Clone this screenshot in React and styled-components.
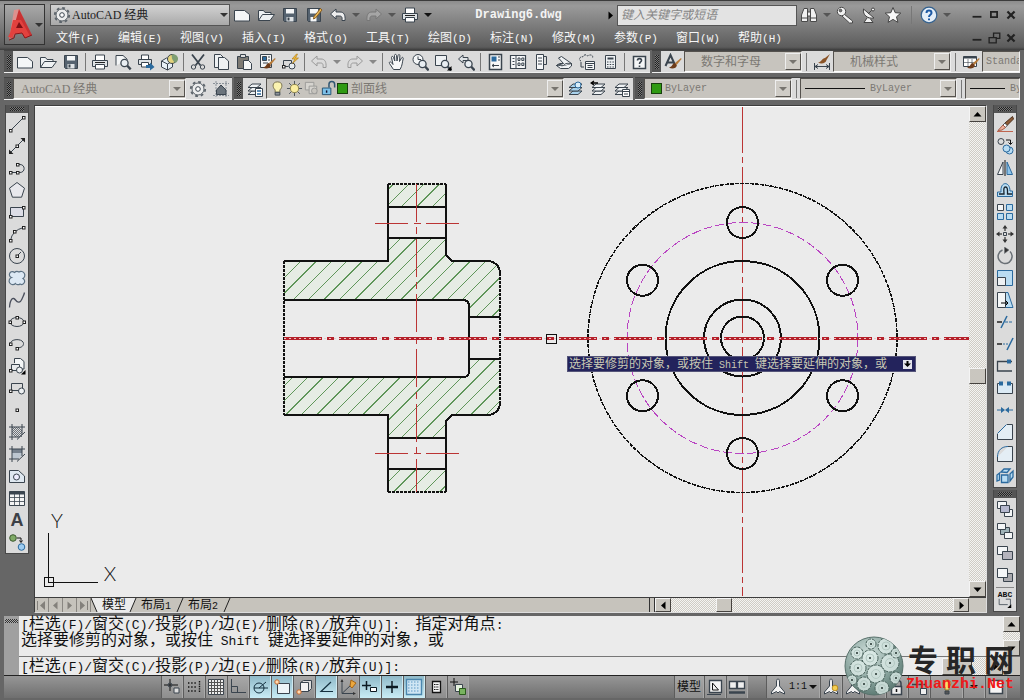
import React from 'react';
import styled, { createGlobalStyle } from 'styled-components';

const INK = '#3a444e';
const BLUE = '#2b6a9e';
const SKY = '#b9dcf2';
const SONG = "'Liberation Serif', 'Noto Sans CJK SC', serif";

const GlobalStyle = createGlobalStyle`
  *, *::before, *::after { box-sizing: border-box; }
  body {
    margin: 0;
    background: #666;
    font: 12px/14px ${SONG};
    color: #111;
  }
  button, input, select {
    margin: 0;
    padding: 0;
    border: 0;
    border-radius: 0;
    background: none;
    color: inherit;
    font: inherit;
  }
`;

/* ---------- icons ---------- */

const Node = ({ x, y }) => (
  <rect x={x - 1} y={y - 1} width="2.5" height="2.5" fill="#fff" stroke="#222" />
);
const Corner = () => <path d="M17.5 13v4.5H13Z" fill="#000" stroke="none" />;
const Lens = ({ x = 10.5, y = 10 }) => (
  <g>
    <circle cx={x} cy={y} r="3.6" fill="#e9eef2" strokeWidth="1.3" />
    <path d={`M${x + 2.8} ${y + 2.8}l3.4 3.6`} strokeWidth="2.4" />
  </g>
);
const Brush = () => (
  <g stroke="none">
    <path d="M17 5l-6 5 1.6 2L17.6 6Z" fill="#b77b3a" />
    <path d="M11 10c-3 .2-2 3.500-6 4.500 3 2 7.500 1 7.800-2.300Z" fill="#6f3c1a" />
  </g>
);
const Sheets = ({ fill = '#eef1f3' }) => (
  <g fill={fill}>
    <path d="M2 14.500l4-3.500h9l-4 3.500Z" />
    <path d="M2 11l4-3.500h9L11 11Z" />
    <path d="M2 7.500L6 4h9l-4 3.500Z" />
  </g>
);
const Frame = ({ children }) => (
  <g>
    {children}
    <path d="M4 1v16M1 4h16M14 1v10M1 14h10M9 16.500L17 9" />
  </g>
);
const Airscale = ({ fill = '#f2f2f2' }) => (
  <path
    d="M9 1c1 0 1.500 1 1.500 3v4l5 6v2l-5-2.500L9 15l-1.500-1.500L2.500 16v-2l5-6V4C7.500 2 8 1 9 1Z"
    fill={fill}
  />
);

const glyphs = {
  new: <path d="M1.500 4.500h10l5 4V15h-15Z" fill="#f4f6f7" />,
  open: (
    <g fill="#eef1f3">
      <path d="M1.500 14.500v-10h5l1.500 2h6v2" />
      <path d="M1.500 14.500l4-6h12l-4.500 6Z" />
    </g>
  ),
  save: (
    <g>
      <path d="M2.500 2.500h13v13h-12l-1-1Z" fill="#55626f" />
      <path d="M5 3h8v4.500H5Z" fill="#f5f6f7" stroke="none" />
      <path d="M5.500 11h7v4.500h-7Z" fill="#dfe3e6" stroke="none" />
      <path d="M6.500 11.500h2v3h-2Z" fill="#3a444e" stroke="none" />
    </g>
  ),
  saveAs: (
    <g>
      <path d="M2.500 2.500h13v13h-12l-1-1Z" fill="#55626f" />
      <path d="M5 3h8v4.500H5ZM5.500 11h6v4.500h-6Z" fill="#f5f6f7" stroke="none" />
      <path d="M17 4l-6.500 8-2 1 .5-2.500L15.500 2.500Z" fill="#eebd5a" stroke="#8a5c20" />
    </g>
  ),
  undo: <path d="M1.500 8L7 3v3h4c4 0 5.500 3 5 8.500h-3c.5-3.500-.5-4.500-2.500-4.500H7v3Z" />,
  redo: <path d="M16.500 8L11 3v3H7c-4 0-5.500 3-5 8.500h3C4.500 11 5.500 10 7.500 10H11v3Z" />,
  print: (
    <g>
      <path d="M4.500 7V2h9v5" fill="#fff" />
      <path d="M1.500 7.500h15v6h-15Z" fill="#dfe3e6" />
      <path d="M4.500 11.500h9V16h-9Z" fill="#fff" />
      <path d="M4 9.500h10" stroke="#222" />
    </g>
  ),
  preview: (
    <g>
      <path d="M2 12.500V2.500h7l4.500 4" fill="#f4f6f7" />
      <Lens />
    </g>
  ),
  publish: (
    <g>
      <path d="M4.500 6V2h7v4" fill="#fff" />
      <path d="M1.500 6.500h13v5h-13Z" fill="#dfe3e6" />
      <path d="M4.500 9.500h7V14h-7Z" fill="#fff" />
      <path d="M9 12h4V9.500L17.500 14 13 17.500V15H9Z" fill={BLUE} stroke="none" />
    </g>
  ),
  globe: (
    <g>
      <path d="M1.500 8l5-3 6 3v6l-5 3-6-3Z" fill="#e7f0f6" />
      <path d="M1.500 8l6 3 5-3M7.500 11v6" />
      <circle cx="12" cy="6" r="4.500" fill="#e3d27c" />
      <path d="M12 1.500A4.500 4.500 0 0 1 15 10c-2-3-4-4-3-8.500Z" fill="#7f9f74" stroke="none" />
    </g>
  ),
  cut: (
    <g>
      <path d="M3 1.500l8.500 11M15 1.500l-8.500 11" strokeWidth="1.800" />
      <circle cx="4.500" cy="14" r="2.200" />
      <circle cx="13.500" cy="14" r="2.200" />
    </g>
  ),
  copyClip: (
    <g fill="#eef1f3">
      <path d="M2.500 14.500v-13h6l3 3v10Z" />
      <path d="M6.500 16.500v-12h6l4 3.500v8.500Z" />
    </g>
  ),
  paste: (
    <g>
      <path d="M2.500 3.500h11v12h-11Z" fill="#7d7a74" />
      <path d="M5.500 1.500h5v3h-5Z" fill="#ddd" />
      <path d="M8.500 7.500h5l3 3v6h-8Z" fill="#f4f6f7" />
    </g>
  ),
  match: (
    <g>
      <path d="M2.500 1.500h11v13h-11Z" fill="#f4f6f7" />
      <path d="M4.500 3.500h4v4h-4Z" fill={BLUE} />
      <path d="M10 4h2M10 7h2M5 10h5" />
      <Brush />
    </g>
  ),
  blockEdit: (
    <g>
      <path d="M2.500 7.500h8v6" />
      <path d="M2.500 7.500v6h5" />
      <circle cx="11" cy="13" r="3" fill="#e9eef2" />
      <Node x={2.500} y={13.500} />
      <path d="M15.500 1l-4.500 5h3l-2.500 4.500L17.500 5H14.500l2-4Z" fill="#f0b93a" stroke="#a87713" strokeWidth=".6" />
    </g>
  ),
  pan: (
    <path
      d="M5.500 16.500L1.500 10.500c-.8-1.500.8-2.200 1.800-1L5 11.500 3.500 4.500c0-1.500 1.700-1.500 2 0L6.800 8 6.500 2.500c0-1.500 1.900-1.500 2 0L9 8l1-5.500c.3-1.400 2-1.200 1.900.2L11.500 8.500 13.500 5c.6-1.200 2.100-.6 1.700.6-1 3.400-.7 7-3.200 10.900Z"
      fill="#f8f8f8"
    />
  ),
  zoomRt: (
    <g>
      <circle cx="7" cy="6.500" r="5" fill="#f4f6f7" />
      <path d="M7 3.500v3h3" />
      <Lens x={11.500} y={11} />
    </g>
  ),
  zoomWin: (
    <g>
      <path d="M1.500 2.500h11v10h-11Z" fill="#eef1f3" />
      <Lens x={11} y={11} />
      <Corner />
    </g>
  ),
  zoomPrev: (
    <g>
      <path d="M1.500 6L6 2v2.500h5v3H6V10Z" fill="#dfe3e6" />
      <Lens x={11.500} y={11} />
    </g>
  ),
  props: (
    <g>
      <path d="M3.500 1.500h12v15h-12Z" fill="#f7f8f9" strokeWidth="1.500" />
      <path d="M5.500 3.500h5v5h-5Z" fill={BLUE} stroke="none" />
      <path d="M12 4h2M12 7h2M6 12.500h7M8 11l-2 1.500L8 14" />
    </g>
  ),
  design: (
    <g>
      <path d="M1.500 2.500h15v13h-15Z" fill="#f7f8f9" strokeWidth="1.200" />
      <path d="M7 3v12M3.500 5.500h2M3.500 8.500h2M3.500 11.500h2" />
      <path d="M9 5h2v2.500H9ZM12.800 5h2v2.500h-2ZM9 10h2v2.500H9ZM12.800 10h2v2.500h-2Z" />
    </g>
  ),
  palettes: (
    <g>
      <path d="M4.500 1.500h7v15h-7Z" fill="#f7f8f9" />
      <path d="M6 5h4M6 8h4M6 11h4M11.500 3.500h3v8h-3" />
    </g>
  ),
  sheetSet: (
    <g fill="#eef1f3">
      <path d="M1.500 12.500l3-2 12 0v2.500l-3 2.500h-8Z" />
      <path d="M1.500 12.500c3-1 5 1 7 0l8-2-10-7-3 1.500 5 5.500Z" />
      <path d="M8.500 12.500c2-3 5-2 8-2" />
    </g>
  ),
  markup: (
    <g>
      <path d="M3 8C0 7 2 3 4.500 4 6 1 9 1.500 9.500 3c3-2 6-1 5 2" strokeDasharray="2 1" />
      <path d="M7.500 8.500h9v8h-9Z" fill="#f7f8f9" />
      <path d="M7.500 10.500h9M9.500 12.500h5M9.500 14.500h5M3 9v5h3" />
    </g>
  ),
  calc: (
    <g>
      <path d="M4.500 2.500h10v13h-10Z" fill="#eef1f3" />
      <path d="M6.500 5.500h6" strokeWidth="2" />
      <path d="M6 9h7M6 11.500h7M6 14h7" strokeDasharray="1.500 1.200" />
    </g>
  ),
  helpBox: (
    <g>
      <path d="M3.500 3.500h12v12h-12Z" fill="#f4f6f7" strokeWidth="1.500" />
      <path d="M7.500 7.500c0-2.500 4-2.500 4 0 0 1.500-2 1.500-2 3.500M9.500 12.500V14" strokeWidth="1.600" />
    </g>
  ),
  textStyle: (
    <g>
      <path d="M1.500 13L6.500 2l5 11M3.500 9.500h6" strokeWidth="2" />
      <Brush />
    </g>
  ),
  dimStyle: (
    <g>
      <path d="M1.500 10v7M16.500 10v7M2 13.500h14M5 11.500l-3 2 3 2M13 11.500l3 2-3 2" />
      <path d="M17 1l-5 4 1.500 2ZM12 5C9 5 9 9 5 9.500c3 2 8 1 8.500-2.500Z" fill="#8a5326" stroke="none" />
    </g>
  ),
  tableStyle: (
    <g>
      <path d="M1.500 3.500h13v10h-13Z" fill="#fff" />
      <path d="M1.500 4.500h13" strokeWidth="2" />
      <path d="M1.500 9.500h13M6 6v7M10 6v7" strokeWidth=".6" />
      <Brush />
    </g>
  ),
  gear: (
    <g>
      <circle cx="9" cy="9" r="7.200" stroke="#5b636a" strokeDasharray="2.800 2.850" strokeWidth="1.800" />
      <circle cx="9" cy="9" r="6" fill="#eceded" stroke="#5b636a" />
      <circle cx="9" cy="9" r="2.300" fill="#fff" />
    </g>
  ),
  wsHome: (
    <g>
      <path d="M4 1v16M14 1v16M1 3.500h16M1 15.500h16" stroke="#8b9299" strokeDasharray="2 1" />
      <path d="M4.500 14.500V10L9 5l5 5v4.500Z" fill="#6b747c" />
    </g>
  ),
  layers: (
    <g>
      <Sheets />
      <path d="M9.500 8.500h7v8h-7Z" fill="#fff" />
      <path d="M11 11h4M11 14h4" stroke={BLUE} strokeWidth="1.500" />
    </g>
  ),
  bulb: (
    <g>
      <path d="M9 2c6 0 5.500 6 2.500 8.500V13h-5v-2.500C3.500 8 3 2 9 2Z" fill="#fbf3b0" stroke="#77704a" />
      <path d="M6.500 13h5v3h-5Z" fill="#8d9399" />
    </g>
  ),
  sun: (
    <g>
      <path d="M9 1v16M1 9h16M3.300 3.300l11.400 11.400M14.700 3.300L3.300 14.700" strokeWidth=".9" />
      <circle cx="9" cy="9" r="4.300" fill="#fbeea0" stroke="#8a8148" />
    </g>
  ),
  freezeVp: (
    <g stroke="#9a9a98">
      <path d="M2.500 2.500h9v8h-9Z" fill="#d6d4cf" />
      <path d="M6.500 6.500h8v8h-8Z" fill="#d6d4cf" />
      <circle cx="12" cy="11.500" r="3" fill="#c7c4be" />
    </g>
  ),
  unlock: (
    <g>
      <path d="M9.500 8V4.500c0-4 6-4 6 0V8" stroke="#2f5672" strokeWidth="1.600" />
      <path d="M2.500 8.500h9v7h-9Z" fill="#7cc0e8" stroke="#24506e" />
      <path d="M7 11v2.500" stroke="#113" strokeWidth="1.500" />
    </g>
  ),
  layerIso: (
    <g>
      <Sheets fill="#a9d2ec" />
      <circle cx="11" cy="5" r="3" fill="#d8edf9" stroke={BLUE} />
    </g>
  ),
  layerPrev: (
    <g>
      <Sheets />
      <path d="M4 1L1 3l3 2M1 3h7" stroke="#000" strokeWidth="1.300" />
    </g>
  ),
  layerState: (
    <g>
      <Sheets />
      <path d="M9.500 9.500h7v7h-7Z" fill="#fff" />
      <path d="M9.500 11.500h7M11 14h4" />
    </g>
  ),
  binoculars: (
    <g fill="#f1f1f1" stroke="#4a4a4a">
      <path d="M1.500 15.500V9L4 2.500h3.500v13Z" />
      <path d="M16.500 15.500V9L14 2.500h-3.500v13Z" />
      <path d="M7.500 6h3v4h-3ZM1.500 12h6M10.500 12h6" />
    </g>
  ),
  key: (
    <g fill="#f1f1f1" stroke="#4a4a4a">
      <path d="M8 8l8.500 7v2h-3L6 10Z" />
      <circle cx="5.500" cy="5.500" r="4.200" />
      <circle cx="4.500" cy="4.500" r="1.300" fill="#777" />
    </g>
  ),
  dish: (
    <g fill="#f1f1f1" stroke="#444">
      <path d="M3.500 3c-1 6 4 10 10.500 9Z" />
      <path d="M8 8l4.500-4.500M7 12l-3 4.500h9L10.500 13" />
      <circle cx="13" cy="3.500" r="1.500" />
    </g>
  ),
  star: <path d="M9 1.500l2.200 5.200 5.600.4-4.300 3.700 1.400 5.600L9 13.400l-4.900 3 1.400-5.600L1.200 7.100l5.600-.4Z" fill="#fafafa" stroke="#444" />,
  help: (
    <g>
      <circle cx="9" cy="9" r="7.800" fill="#e4eef8" stroke="#35628f" strokeWidth="1.200" />
      <path d="M6.500 7c0-3.300 5-3.300 5 0 0 1.800-2.500 1.800-2.500 4M9 12.500v1.800" stroke="#1d5aa5" strokeWidth="2" />
    </g>
  ),
  min: <path d="M4 11h10" stroke="#222" strokeWidth="2" />,
  max: <path d="M5.500 5.500h7v6h-7Z" stroke="#222" strokeWidth="2" />,
  restore: <path d="M8.500 8V3.500h7v6H12M3.500 8.500h8v6h-8Z" stroke="#222" strokeWidth="1.500" />,
  close: <path d="M5 5l8 8M13 5l-8 8" stroke="#222" strokeWidth="2.500" />,

  line: <g><path d="M2.500 15.500l13-13" /><Node x={2.500} y={15.500} /><Node x={15.500} y={2.500} /></g>,
  xline: (
    <g>
      <path d="M2 16L16 2" />
      <path d="M1 17v-4.500L5.500 17ZM17 1v4.500L12.500 1Z" fill="#222" stroke="none" />
      <Node x={9} y={9} />
    </g>
  ),
  pline: (
    <g>
      <path d="M2.500 13.500h9.500c5.500 0 5.500-8 0-8H9.500" />
      <Node x={2.500} y={13.500} /><Node x={9.500} y={13.500} /><Node x={9.500} y={5.500} />
    </g>
  ),
  polygon: <path d="M9 1.500l7.500 5.700-2.900 9H4.400l-2.900-9Z" fill="#e8e8ec" />,
  rect: <g><path d="M2.500 4.500h13v9h-13Z" fill="#dcdde6" /><Node x={2.500} y={13.500} /><Node x={15.500} y={4.500} /></g>,
  arc: <g><path d="M2.500 15.500Q4 5.500 15.500 2.500" /><Node x={2.500} y={15.500} /><Node x={6.500} y={6.500} /><Node x={15.500} y={2.500} /></g>,
  circle: <g><circle cx="9" cy="9" r="7.500" /><path d="M9 9l4-4" /><Node x={9} y={9} /></g>,
  cloud: (
    <path
      d="M6.500 3.500A3 3 0 1 0 3.500 8.500a3.700 3.700 0 1 0 4 6 3.200 3.200 0 0 0 4.500.5 3 3 0 1 0 3-5.500 3.700 3.700 0 1 0-4-6.500 3.500 3.500 0 0 0-4.500.5Z"
      fill="#dde9f4"
      stroke="#5c7183"
      strokeWidth="1.200"
    />
  ),
  spline: <path d="M1.500 16.500C2 8 5 5.500 7.500 9s5 2.500 6.500-1 2-4 2.500-6.500" stroke="#4a4f5c" strokeWidth="1.300" />,
  ellipse: (
    <g>
      <ellipse cx="9" cy="9" rx="7" ry="4.500" />
      <Node x={2} y={9} /><Node x={16} y={9} /><Node x={9} y={4.500} />
    </g>
  ),
  ellipseArc: (
    <g>
      <path d="M2.500 9C2 3.500 15 3 15.500 8.500c0 3-2.500 4-6 4.500" />
      <Node x={2.500} y={9} /><Node x={9} y={13.500} />
    </g>
  ),
  insert: (
    <g>
      <path d="M6.500 6V1.500h6l3.500 3V12h-3" fill="#f4f6f7" />
      <path d="M3.500 7.500h8v6h-8Z" fill="#e8eaec" />
      <circle cx="11.500" cy="13" r="3" fill="#eef1f3" />
      <Node x={2.500} y={13.500} />
      <Corner />
    </g>
  ),
  block: (
    <g>
      <path d="M3.500 4.500h11v7h-11Z" />
      <circle cx="13.500" cy="12" r="3" fill="#eef1f3" />
      <Node x={2.500} y={12} />
    </g>
  ),
  point: <Node x={9} y={9} />,
  hatch: <Frame><path d="M4 4l10 10M4 8l6 6M8 4l6 6M4 6l8 8M6 4l8 8M10 4l4 4M4 10l4 4" strokeWidth=".7" /></Frame>,
  gradient: <Frame><path d="M4 4h10v6l-4 4H4Z" fill="#bcc6d0" stroke="none" /><path d="M4 4h10v4H4Z" fill="#75808c" stroke="none" /></Frame>,
  region: <g><path d="M1.500 15.500v-12h9l6 5.500v6.500Z" fill="#dfe8f0" /><circle cx="8.500" cy="10" r="3" fill="#eef" /></g>,
  table: (
    <g>
      <path d="M1.500 2.500h15v14h-15Z" fill="#f4f4f4" />
      <path d="M1.500 4h15" strokeWidth="3" />
      <path d="M1.500 8.500h15M1.500 12.500h15M6.500 5v11M11.500 5v11" strokeWidth=".8" />
    </g>
  ),
  addSel: (
    <g>
      <circle cx="5" cy="5" r="3.300" fill="#7faa66" stroke="#3d5a30" />
      <circle cx="13.500" cy="14" r="3.300" fill="#9ecdf2" stroke={BLUE} />
      <path d="M9 5h4v4M11.500 7.500L13 9.500l1.500-2" stroke="#111" />
    </g>
  ),

  erase: (
    <g>
      <path d="M1 16.500h16" stroke="#c0654f" />
      <path d="M16.500 1.500L9 8l2 2.500L17.500 4Z" fill="#8b5a35" stroke="#4b2f1c" />
      <path d="M9 8l2 2.500-1.500 2L7 10Z" fill="#fff" stroke="#555" />
      <path d="M7 10l2.500 2.500L6 15l-4 .5Z" fill="#efb39f" stroke="#a55b45" />
    </g>
  ),
  copy: (
    <g>
      <circle cx="5" cy="4.500" r="3" />
      <path d="M10 3h4.500v4M12.500 5.500l2 2 2-2" stroke="#111" />
      <circle cx="13.500" cy="13.500" r="3.500" fill={SKY} stroke={BLUE} />
      <circle cx="10.500" cy="11.500" r="3.500" fill={SKY} stroke={BLUE} />
    </g>
  ),
  mirror: (
    <g>
      <path d="M7 3v12.500H1.500Z" fill="#f4f6f7" />
      <path d="M11 3v12.500h5.500Z" fill="#8ec4ea" stroke={BLUE} />
      <path d="M9 1v16" stroke="#111" />
    </g>
  ),
  offset: (
    <g>
      <path d="M1.500 15.500V11H5C4 0 14 0 14 10h2.500v5.500Z" fill={SKY} stroke={BLUE} />
      <path d="M3 13h5c0-3-1-7 1.500-7s2 4 2 7H16" stroke="#18232d" strokeWidth="1.300" />
    </g>
  ),
  array: (
    <g>
      <path d="M1.500 1.500h6v6h-6Z" fill="#f4f6f7" />
      <path d="M10.500 1.500h6v6h-6ZM1.500 10.500h6v6h-6ZM10.500 10.500h6v6h-6Z" fill={SKY} stroke={BLUE} />
    </g>
  ),
  move: (
    <g>
      <path d="M9 2v4M9 12v4M2 9h4M12 9h4" stroke="#111" />
      <path d="M9 0l2.500 3.500h-5ZM9 18l2.500-3.500h-5ZM0 9l3.500-2.500v5ZM18 9l-3.500-2.500v5Z" fill="#333" stroke="none" />
      <path d="M7.500 7.500h3v3h-3Z" />
    </g>
  ),
  rotate: (
    <g stroke="#6a7076" strokeWidth="1.500">
      <path d="M6.500 3A7 7 0 1 0 14 4.500" />
      <path d="M8.500 0l4.500 3-4.500 3.500Z" fill="#333" strokeWidth=".5" />
    </g>
  ),
  scale: (
    <g>
      <path d="M1.500 1.500h15v15h-15Z" fill={SKY} stroke={BLUE} />
      <path d="M1.500 8.500h8v8h-8Z" fill="#eef1f3" />
    </g>
  ),
  stretch: (
    <g>
      <path d="M9 1.500h3l5 15H9Z" fill={SKY} stroke={BLUE} />
      <path d="M1.500 1.500h8v15h-8Z" fill="#f4f6f7" />
      <path d="M5 12h7M9.500 9.500L12 12l-2.500 2.500" stroke="#000" />
    </g>
  ),
  trim: <g stroke={BLUE}><path d="M1 9h5" stroke="#222" strokeWidth="1.500" /><path d="M9 9h8" strokeDasharray="3 1" /><path d="M5 15l6-12" strokeWidth="1.500" /></g>,
  extend: <g stroke={BLUE}><path d="M1 9h5" stroke="#222" strokeWidth="1.500" /><path d="M7 9h5" strokeDasharray="2 1" /><path d="M11 15l6-12" strokeWidth="1.500" /></g>,
  breakPt: <g><path d="M16 4.500H1.500v9.500H16" strokeWidth="1.300" /><path d="M11 2.500h4v4h-4Z" fill={BLUE} stroke="none" /></g>,
  break: <g><path d="M4 4.500H1.500v10h15v-10H14" fill="#dbeaf5" /><path d="M3 2.500h4v4H3ZM11 2.500h4v4h-4Z" fill={BLUE} stroke="none" /></g>,
  join: <g stroke={BLUE}><path d="M1 9h6M11 9h6" /><path d="M5 6l4 3-4 3ZM13 6L9 9l4 3Z" fill={BLUE} stroke="none" /></g>,
  chamfer: <g><path d="M1.500 11v5.500h15v-15H11" fill="#e4eef5" /><path d="M1.500 10.500l9-9" stroke={BLUE} /></g>,
  fillet: <g><path d="M1.500 12v4.500h15v-15H12" fill="#e4eef5" /><path d="M1.500 12C1.500 5 6 1.500 12 1.500" stroke={BLUE} /></g>,
  explode: (
    <g fill={SKY} stroke={BLUE} strokeWidth="1.300">
      <path d="M5.500 8h6.500v7.500H5.500ZM5 5l3-3h6l-3 3.500ZM14 7l3-3v6l-3 4ZM1 14V8l2.500-2v7Z" />
    </g>
  ),
  front: <g fill="#f4f6f7"><path d="M1.500 1.500h9v7h-9ZM8.500 9.500h8v7h-8Z" /><path d="M4.500 5.500h9v7h-9Z" fill="#b5b8ce" /></g>,
  back: <g fill="#f4f6f7"><path d="M4.500 5.500h9v7h-9Z" fill="#9fb3b8" /><path d="M1.500 1.500h8v6h-8ZM8.500 10.500h8v6h-8Z" /></g>,
  above: <g fill="#f4f6f7"><path d="M1.500 2.500h10v8h-10Z" /><path d="M6.500 7.500h10v8h-10Z" fill="#b4b3bc" /></g>,
  under: <g><path d="M7.500 7.500h9v8h-9Z" fill="#a9a9ad" /><path d="M1.500 2.500h10v9h-10Z" fill="#f4f6f7" /></g>,
  leader: <g><path d="M1.500 1v7.500h11M10 1.500h6v9" /><path d="M17 8v5h-5Z" fill="#000" stroke="none" /></g>,

  infer: <g><path d="M1 7h14M7 1v12" stroke="#111" /><path d="M11 10h5v5h-5Z" fill="#ddd" /><circle cx="7" cy="7" r="2" /></g>,
  snap: <g stroke="#111" strokeWidth="1.400"><path d="M3 5h9M3 9h9M3 13h9" strokeDasharray="1.400 1.800" /><path d="M14.500 3v11" strokeDasharray="1.400 1" /></g>,
  grid: <g><path d="M1.500 1.500h15v15h-15Z" fill="#eee" /><path d="M1.500 4.500h15M1.500 7.500h15M1.500 10.500h15M1.500 13.500h15M4.500 1.500v15M7.500 1.500v15M10.500 1.500v15M13.500 1.500v15" stroke="#555" /></g>,
  ortho: <path d="M2.500 1v13.500H17M2.500 8.500h6v6" />,
  polar: <g stroke="#14303f"><circle cx="8" cy="10" r="5" /><path d="M3 10h14M8 10l7-6" /></g>,
  osnap: <g><path d="M4.500 5.500h12v10h-12Z" fill="#eef4f7" /><circle cx="4" cy="4" r="2.200" fill="#ffd9b0" stroke="#c8692c" /></g>,
  osnap3d: <g><path d="M5.500 4.500l3-2h8v8l-3 3" fill="#ddd" /><path d="M5.500 4.500h8v9h-8Z" fill="#f2f2f2" /><circle cx="4" cy="14" r="2.200" fill="#ffd9b0" stroke="#c8692c" /></g>,
  otrack: <path d="M14 4L4 13.500h12" stroke="#14303f" strokeWidth="1.200" />,
  ducs: <g><path d="M3 2v13.500h13M3 15.500L13 6" /><path d="M3 1l-1.500 3h3ZM17 15.500L14 14v3Z" fill="#333" stroke="none" /><path d="M12 2l5 3-4 5-2-2Z" fill="#eda83e" stroke="#a56516" /></g>,
  dyn: <g stroke="#0c1a22"><path d="M5.500 3v9M1 7.500h9" strokeWidth="1.500" /><path d="M9.500 9.500h6v4h-6Z" fill="#fff" /></g>,
  lwt: <g stroke="#0c1a22"><path d="M9 3v12" strokeWidth="1.500" /><path d="M3 9h12" strokeWidth="2.500" /></g>,
  tpy: (
    <g>
      <path d="M1.500 1.500h15v15h-15Z" fill="#cfe6f4" stroke="#4a86ad" strokeWidth="1.400" />
      <path d="M3 4h12M3 7h12M3 10h12M3 13h12" stroke="#82b2d3" strokeWidth="1.500" strokeDasharray="1.500 1.500" />
    </g>
  ),
  qp: <g stroke="#111"><path d="M5.500 3.500h8v11h-8Z" fill="#f4f4f4" strokeWidth="1.300" /><path d="M7 6.500h5M7 9h5M7 11.500h5" strokeDasharray="1.500 .8" /></g>,
  cycle: <g><path d="M1 4h8M5 0v8" stroke="#111" /><path d="M6.500 6.500h7v7h-7Z" fill="#e4f0de" /><path d="M10.500 10.500h6v6h-6Z" fill="#78b35f" stroke="#2b5b1c" /></g>,
  paper: <g><path d="M3.500 2.500h12v12h-12Z" fill="#f4f4f4" strokeWidth="1.300" /><path d="M6.500 5v7h6Z" stroke="#111" /><path d="M1 16.500h14" /></g>,
  quick: <g><path d="M1.500 3.500h7v7h-7ZM9.500 3.500h7v7h-7Z" fill="#eee" strokeWidth="1.300" /><path d="M1 14.500h16" strokeWidth="2.500" /></g>,
  anno: <Airscale />,
  annoVis: <g><Airscale /><circle cx="13" cy="10" r="2.800" fill="#f6cf52" stroke="#b98d23" /></g>,
  lock: <g><path d="M6 9V5.500c0-4 7-4 7 0V9" strokeWidth="1.500" /><path d="M3.500 8.500h10v8h-10Z" fill="#eee" strokeWidth="1.500" /><path d="M8.500 11v3" stroke="#111" strokeWidth="1.500" /></g>,
  hardware: <g><path d="M2 6.500h13M12 3v7" strokeWidth="1.500" /><path d="M10.500 10.500h6v6h-6Z" fill="#eee" /></g>,
  tip: <g><path d="M9 2c5 0 4.500 5 2 7v3H7V9C4.500 7 4 2 9 2Z" fill="#f9dc6c" stroke="#96762a" /><path d="M7 13h4v3H7Z" fill="#555" /></g>,
  clean: <path d="M2.500 2.500h13v13h-13Z" fill="#f4f4f4" strokeWidth="1.500" />,
};

const Svg = styled.svg`
  display: block;
  flex: none;
  width: ${p => p.$size}px;
  height: ${p => p.$size}px;
`;

const Icon = ({ name, size = 18, color = INK, fill = 'none' }) => (
  <Svg $size={size} viewBox="0 0 18 18" fill={fill} stroke={color} aria-hidden="true">
    {glyphs[name]}
  </Svg>
);

const Caret = styled.span`
  flex: none;
  width: 0;
  height: 0;
  border: solid transparent;
  border-width: 4px 4px 0;
  border-top-color: ${p => p.$color || '#333'};
`;

const Arrow = ({ dir, color = '#000' }) => (
  <Svg $size={9} viewBox="0 0 9 9" fill={color} aria-hidden="true">
    {dir === 'up' && <path d="M4.500 2L8.500 6.500h-8Z" />}
    {dir === 'down' && <path d="M.5 2.500h8l-4 4.500Z" />}
    {dir === 'left' && <path d="M6.500.5v8L2 4.500Z" />}
    {dir === 'right' && <path d="M2.500.5v8L7 4.500Z" />}
    {dir === 'first' && <path d="M0 0h1v9H0ZM8 0v9L3 4.500Z" />}
    {dir === 'last' && <path d="M8 0h1v9H8ZM1 0v9l5-4.500Z" />}
    {dir === 'tip' && <path d="M3.500 1h2v2.500h2.500L4.500 7 1 3.500h2.500Z" />}
  </Svg>
);

/* Latin letters are half the width of a Chinese character */
const Half = styled.span`
  font-family: 'Liberation Mono', monospace;
  font-size: ${p => p.$size}px;
  line-height: 1;
  white-space: pre;
`;

const Mixed = ({ children, size = 10 }) =>
  children.split(/([\x20-\x7e]+)/).map((part, i) =>
    i % 2 ? <Half key={i} $size={size}>{part}</Half> : part
  );

/* ---------- shared controls ---------- */

const IconButton = styled.button`
  display: flex;
  align-items: center;
  justify-content: center;
  flex: none;
  width: ${p => p.$w || 23}px;
  height: ${p => p.$h || 22}px;
`;

const Separator = styled.span`
  flex: none;
  width: ${p => p.$w || 6}px;
  height: 18px;
  display: flex;
  justify-content: center;

  &::before {
    content: '';
    width: 1px;
    background: #777;
  }
`;

const SelectBox = styled.div`
  display: flex;
  align-items: center;
  flex: ${p => (p.$grow ? '1 1 0' : 'none')};
  width: ${p => p.$w}px;
  min-width: 0;
  height: 21px;
  padding-left: ${p => p.$pad || 6}px;
  overflow: hidden;
  background: #c7c4be;
  border: 1px solid #55524e;
  border-bottom-color: #fff;
  border-right-color: #eee;
  color: #7b7873;
`;

const Select = styled.select`
  appearance: none;
  flex: 1;
  min-width: 0;
  height: 100%;
  padding-left: ${p => p.$pad || 0}px;
  font-family: ${p => (p.$mono ? "'Liberation Mono', monospace" : 'inherit')};
  font-size: ${p => (p.$mono ? 10 : 12)}px;
  outline: none;
`;

const SelectArrow = styled.span`
  display: flex;
  align-items: center;
  justify-content: center;
  flex: none;
  width: 16px;
  height: 17px;
  background: #cfccc6;
  border: 1px solid #eee;
  border-right-color: #55524e;
  border-bottom-color: #55524e;
`;

const Swatch = styled.span`
  flex: none;
  width: 11px;
  height: 11px;
  margin-right: 3px;
  background: #2f9a12;
  border: 1px solid #173f0c;
`;

const SampleLine = styled.span`
  flex: none;
  width: ${p => p.$w}px;
  height: 1px;
  margin-right: 5px;
  background: #111;
`;

const Combo = ({ label, value, w, pad, inner, mono, grow, children }) => (
  <SelectBox $w={w} $pad={pad} $grow={grow}>
    {children}
    <Select aria-label={label} defaultValue={value} $pad={inner} $mono={mono}>
      <option>{value}</option>
    </Select>
    {!grow && <SelectArrow><Caret $color="#77746f" /></SelectArrow>}
  </SelectBox>
);

/* ---------- title bar ---------- */

const Shell = styled.div`
  display: flex;
  flex-direction: column;
  min-height: 100vh;
  padding-bottom: 2px;
  overflow: hidden;
  background: #666;
  position: relative;
`;

const TitleBar = styled.header`
  display: flex;
  height: 50px;
  padding: 3px 5px 0 4px;
  background: linear-gradient(#8c8c8c, #9a9a9a 10%, #5c5c5c 94%, #3c3c3c);
  border-top: 1px solid #3c3c3c;
`;

const AppButton = styled.button`
  display: flex;
  align-items: center;
  flex: none;
  width: 41px;
  height: 41px;
  background: linear-gradient(#a9a9a9, #6e6e6e);
  border: 1px solid #333;
`;

const TitleRows = styled.div`
  flex: 1;
  min-width: 0;
`;

const TitleRow = styled.div`
  display: flex;
  align-items: center;
  height: 22px;
  padding-left: 5px;
`;

const WorkspaceBox = styled.div`
  display: flex;
  align-items: center;
  flex: none;
  width: 180px;
  height: 22px;
  padding: 0 1px 0 2px;
  background: linear-gradient(#d2d2d2, #a9a9a9);
  border: 1px solid #555;
  color: #222;
`;

const DocTitle = styled.h1`
  flex: 1;
  margin: 0;
  overflow: hidden;
  text-align: center;
  white-space: nowrap;
  font: bold 12px/16px 'Liberation Mono', monospace;
  color: #f4f4f4;
`;

const SearchInput = styled.input`
  flex: none;
  width: 180px;
  height: 21px;
  padding-left: 3px;
  background: #e3e3e3;
  border: 1px solid #555;

  &::placeholder {
    color: #858585;
    font-style: italic;
    opacity: 1;
  }
`;

const WindowButtons = styled.div`
  display: flex;
  margin-left: ${p => (p.$gap ? `${p.$gap}px` : 'auto')};
`;

const MenuBar = styled.nav`
  display: flex;
  align-items: center;
  height: 24px;
  padding-left: 2px;
`;

const MenuItem = styled.button`
  flex: none;
  width: 62px;
  height: 20px;
  color: #f6f6f6;
  white-space: nowrap;
`;

/* ---------- toolbars ---------- */

const ToolRow = styled.div`
  display: flex;
  height: 23px;
  margin: 0 4px ${p => p.$gap}px;
  gap: 2px;
`;

const Strip = styled.div`
  display: flex;
  align-items: center;
  flex: ${p => (p.$grow ? '1 1 0' : 'none')};
  min-width: 0;
  background: #dbdbdb;
  border-top: 1px solid #444;
  border-bottom: 1px solid #f0f0f0;
`;

const Grip = styled.span`
  display: flex;
  align-items: center;
  justify-content: center;
  align-self: stretch;
  flex: none;
  width: ${p => (p.$flat ? 'auto' : '9px')};
  height: ${p => (p.$flat ? '8px' : 'auto')};
  background: #555;

  &::before {
    content: '';
    width: ${p => (p.$flat ? 14 : 4)}px;
    height: ${p => (p.$flat ? 4 : 14)}px;
    background: repeating-conic-gradient(#222 0 25%, #777 0 50%) 0 0 / 2px 2px;
  }
`;

const Bars = ({ items }) =>
  items.map((item, i) => {
    if (item === '|') return <Separator key={i} />;
    if (item === 'v') return <IconButton key={i} $w={13} aria-label="more"><Caret $color="#888" /></IconButton>;
    const faded = item === 'undo' || item === 'redo';
    return (
      <IconButton key={i} aria-label={item}>
        <Icon name={item} color={faded ? '#9a9a9a' : INK} />
      </IconButton>
    );
  });

/* ---------- workspace ---------- */

const Middle = styled.div`
  display: flex;
  flex: 1;
  align-items: stretch;
  padding: 0 7px 0 5px;
`;

const Palette = styled.div`
  display: flex;
  flex-direction: column;
  width: 24px;
  background: #dbdbdb;
  border: 1px solid #484848;
  border-top: 0;
`;

const RightDock = styled.div`
  display: flex;
  flex-direction: column;
  gap: 2px;
  margin-left: 6px;
`;

const LeftDock = styled.div`
  margin-right: 5px;
`;

const Rule = styled.hr`
  width: 18px;
  margin: 1px auto;
  border: 0;
  border-top: 1px solid #888;
`;

const Letter = styled.span`
  font: bold 18px/22px 'Liberation Sans', sans-serif;
  color: #3c4046;
`;

const LeaderLabel = styled.span`
  font: bold 8px/7px 'Liberation Mono', monospace;
  color: #111;
`;

const LeaderButton = styled(IconButton)`
  flex-direction: column;
  padding-top: 2px;
`;

const DrawWindow = styled.main`
  display: flex;
  flex-direction: column;
  flex: 1;
  min-width: 0;
  border: 1px solid #3d3d3d;
  border-right-color: #ddd;
  border-bottom-color: #ddd;
`;

const CanvasRow = styled.div`
  display: flex;
  flex: 1;
`;

const Canvas = styled.div`
  position: relative;
  flex: 1;
  min-width: 0;
  overflow: hidden;
  background: #ebebeb;
  border-top: 1px solid #fff;
`;

const Drawing = styled.svg`
  display: block;
  width: 100%;
  height: 489px;
`;

const CursorTip = styled.div`
  position: absolute;
  left: 532px;
  top: 249px;
  display: flex;
  align-items: center;
  width: 349px;
  height: 16px;
  padding: 0 3px 0 1px;
  justify-content: space-between;
  white-space: nowrap;
  background: #23235c;
  border: 1px solid #555579;
  color: #c9c9b4;
`;

const TipKey = styled.span`
  display: flex;
  align-items: center;
  justify-content: center;
  width: 9px;
  height: 9px;
  background: #e4e4ee;
`;

const Track = styled.div`
  display: flex;
  flex-direction: ${p => (p.$vertical ? 'column' : 'row')};
  flex: ${p => (p.$fill ? `${p.$fill} 1 0` : 'none')};
  width: ${p => (p.$vertical ? '17px' : 'auto')};
  min-width: ${p => p.$min || 0}px;
  background: repeating-conic-gradient(#f4f4f2 0 25%, #cfccc5 0 50%) 0 0 / 2px 2px;
`;

const ScrollButton = styled.button`
  display: flex;
  align-items: center;
  justify-content: center;
  flex: none;
  width: ${p => p.$w || 16}px;
  height: ${p => p.$h || 16}px;
  background: #c9c6bf;
  border: 1px solid #f4f4f4;
  border-right-color: #45423e;
  border-bottom-color: #45423e;
`;

const Spacer = styled.span`
  flex: ${p => p.$grow || 1} 1 0;
`;

const TabRow = styled.div`
  display: flex;
  align-items: stretch;
  height: 15px;
  background: #c6c3bc;
  border-top: 1px solid #3d3d3d;
`;

const NavButton = styled.button`
  display: flex;
  align-items: center;
  justify-content: center;
  width: 14px;
  border-right: 1px solid #8a8782;
`;

const Tab = styled.button`
  padding: 0 ${p => (p.$active ? 2 : 4)}px;
  line-height: 13px;
  white-space: nowrap;
  background: ${p => (p.$active ? '#ebebeb' : 'transparent')};
`;

const Slash = ({ back, left = 'none' }) => (
  <svg width="9" height="14" aria-hidden="true">
    <path d={back ? 'M0 0l6 14h3V0Z' : 'M0 0h8L2 14H0Z'} fill={back ? '#ebebeb' : left} />
    <path d={back ? 'M0 0l6 14' : 'M8 0L2 14'} stroke="#222" />
  </svg>
);

const Splitter = styled.span`
  width: 6px;
  border: solid #333;
  border-width: 0 1px;
`;

const CornerBox = styled.span`
  flex: none;
  align-self: stretch;
  width: 17px;
  background: #c9c6bf;
`;

/* ---------- command line ---------- */

const CommandPanel = styled.section`
  display: flex;
  margin: 3px 4px 0;
  background: #ebebeb;
`;

const CommandGrip = styled.span`
  flex: none;
  width: 15px;
  padding: 3px 1px;
  background: #a0a0a0;

  &::before {
    content: '';
    display: block;
    height: 4px;
    background: repeating-conic-gradient(#333 0 25%, #aaa 0 50%) 0 0 / 2px 2px;
  }
`;

const CommandBody = styled.div`
  display: flex;
  flex-direction: column;
  flex: 1;
  min-width: 0;
  font-size: 16px;
  line-height: 16px;
`;

const History = styled.div`
  display: flex;
  justify-content: space-between;
  height: 41px;
  padding-left: 2px;
  border-bottom: 1px solid #777;
`;

const HistoryText = styled.p`
  margin: 0;
  height: 40px;
  white-space: pre;
`;

const PromptRow = styled.div`
  display: flex;
  align-items: center;
  height: 18px;
  padding-left: 2px;
  white-space: nowrap;
`;

const PromptInput = styled.input`
  flex: 1;
  min-width: 0;
  outline: none;
`;

/* ---------- status bar ---------- */

const StatusBar = styled.footer`
  display: flex;
  align-items: stretch;
  height: 23px;
  margin: 0 4px;
  padding-left: 157px;
  background: linear-gradient(#969696, #6f6f6f);
  border-top: 1px solid #222;
`;

const StatusButton = styled.button`
  display: flex;
  align-items: center;
  justify-content: center;
  flex: none;
  gap: 2px;
  width: ${p => p.$w || 22}px;
  white-space: nowrap;
  background: ${p => (p.$on ? 'linear-gradient(#8fb9c8, #c9ecf5)' : 'linear-gradient(#a8a8a8, #8e8e8e)')};
  border-left: 1px solid #5c5c5c;
  border-right: 1px solid ${p => (p.$on ? '#cfe8ef' : '#a9a9a9')};
`;

const StatusGap = styled.span`
  flex: none;
  width: ${p => p.$w}px;
`;

const Brand = styled.div`
  position: absolute;
  right: 10px;
  bottom: 4px;
  display: flex;
  align-items: flex-end;
  gap: 2px;
  pointer-events: none;
`;

const BrandText = styled.div`
  display: flex;
  flex-direction: column;
  align-items: flex-end;
  padding-bottom: 3px;
`;

const BrandName = styled.div`
  display: flex;
  gap: 8px;
  font: bold 30px/36px 'Noto Sans CJK SC', sans-serif;
  color: #262626;
`;

const BrandUrl = styled.div`
  font: bold 15px/17px 'Liberation Mono', monospace;
  color: #f01818;
`;

/* ---------- data ---------- */

const menus = [
  '文件(F)', '编辑(E)', '视图(V)', '插入(I)', '格式(O)', '工具(T)',
  '绘图(D)', '标注(N)', '修改(M)', '参数(P)', '窗口(W)', '帮助(H)',
];

const standard = [
  'new', 'open', 'save', '|', 'print', 'preview', 'publish', 'globe', '|',
  'cut', 'copyClip', 'paste', 'match', 'blockEdit', '|', 'undo', 'v', 'redo', 'v', '|',
  'pan', 'zoomRt', 'zoomWin', 'zoomPrev', '|',
  'props', 'design', 'palettes', 'sheetSet', 'markup', 'calc', '|', 'helpBox',
];

const drawTools = [
  'line', 'xline', 'pline', 'polygon', 'rect', 'arc', 'circle', 'cloud', 'spline', 'ellipse',
  'ellipseArc', 'insert', 'block', 'point', 'hatch', 'gradient', 'region', 'table', 'mtext', 'addSel',
];

const modifyTools = [
  'erase', 'copy', 'mirror', 'offset', 'array', 'move', 'rotate', 'scale', 'stretch',
  'trim', 'extend', 'breakPt', 'break', 'join', 'chamfer', 'fillet', 'explode',
];

const toggles = [
  ['infer'], ['snap'], ['grid'], ['ortho'], ['polar', true], ['osnap', true], ['osnap3d'],
  ['otrack', true], ['ducs'], ['dyn', true], ['lwt', true], ['tpy', true], ['qp'], ['cycle'],
];

const PROMPT = '[栏选(F)/窗交(C)/投影(P)/边(E)/删除(R)/放弃(U)]:';
const PICK = '选择要修剪的对象，或按住 Shift 键选择要延伸的对象，或';

/* ---------- drawing ---------- */

const hatchLines = Array.from({ length: 34 }, (_, i) => 562 + 15.4 * (i - 2));
const bolts = [0, 60, 120, 180, 240, 300].map(a => {
  const r = (a * Math.PI) / 180;
  return [742.5 + 115.5 * Math.sin(r), 338 - 115.5 * Math.cos(r)];
});

const SECTION =
  'M388 184H446V207H388ZM388 238H446V255Q446 261 452 261H488Q500 261 500 273V317H469V305Q469 300 464 300H284V261H388Z' +
  'M284 377H464Q469 377 469 371V359H500V403Q500 415 488 415H452Q446 415 446 421V438H388V415H284ZM388 469H446V492H388Z';

const PartDrawing = () => (
  <Drawing fill="none" stroke="#111" shapeRendering="crispEdges" role="img" aria-label="法兰盘">
    <defs>
      <clipPath id="section"><path d={SECTION} /></clipPath>
    </defs>
    <g transform="translate(-35 -107)">
      <path d={SECTION} fill="#e6ece4" stroke="none" />
      <g clipPath="url(#section)" stroke="#5f9659">
        {hatchLines.map(s => <path key={s} d={`M${s - 500} 500L${s - 180} 180`} />)}
      </g>

      <g strokeWidth="2">
        <path d="M388 184V261H284M446 184V255L452 261H488C494 261 500 266 500 273" />
        <path d="M388 492V415H284M446 492V421L452 415H488C494 415 500 410 500 403" />
        <path d="M388 207H446M388 238H446M388 438H446M388 469H446" />
        <path d="M284 300H463Q469 300 469 306V371Q469 377 463 377H284M469 317H500M469 359H500" />
        <path d="M388 184H446M388 492H446M284 261V415M500 273V403" strokeDasharray="3 1" strokeWidth="1.500" />
      </g>

      <g stroke="#bb3434">
        <path d="M416.500 184V492" strokeDasharray="38 5 7 5" />
        <path d="M375 223.500H460M375 453.500H460" strokeDasharray="33 6 7 5" />
        <path d="M742.500 107V597" strokeDasharray="46 4 6 4" />
      </g>

      <circle cx="742.500" cy="338" r="154.500" strokeWidth="1.500" strokeDasharray="4 1" />
      <circle cx="742.500" cy="338" r="115.500" stroke="#b944c2" strokeDasharray="9 3" />
      <g strokeWidth="2">
        <circle cx="742.500" cy="338" r="77" />
        <circle cx="742.500" cy="338" r="38.500" />
        <circle cx="742.500" cy="338" r="21.500" />
        {bolts.map(([x, y]) => <circle key={`${x},${y}`} cx={x} cy={y} r="15.500" />)}
      </g>

      <path d="M284 338.500H970" stroke="#b5202a" strokeWidth="3" strokeDasharray="38 5 7 5" />
      <path d="M284 338.500H970" stroke="#ecc4c4" strokeDasharray="2 3" />
      <path d="M546.500 334.500h10v9h-10Z" strokeWidth="1" />

      <path d="M48.500 533V582.500H98M44.500 577.500h9v9h-9Z" />
      <g fill="#111" stroke="none" fontFamily="Lato, sans-serif" fontWeight="300" fontSize="20" textAnchor="middle">
        <text x="57" y="528">Y</text>
        <text x="110" y="581">X</text>
      </g>
    </g>
  </Drawing>
);

const Sphere = () => {
  const cells = [
    [26, 22, 8], [42, 10, 8], [46, 27, 9], [32, 38, 9], [14, 32, 8], [20, 48, 7],
    [38, 52, 7], [52, 42, 6], [13, 17, 6], [27, 8, 5], [52, 17, 5], [8, 44, 5],
  ];
  return (
    <svg width="60" height="60" viewBox="0 0 60 60" aria-hidden="true">
      <defs>
        <radialGradient id="ball" cx=".4" cy=".3" r=".7">
          <stop offset="0" stopColor="#cfdfdb" />
          <stop offset=".6" stopColor="#8fa9a3" />
          <stop offset="1" stopColor="#5f7d76" />
        </radialGradient>
        <clipPath id="ballClip"><circle cx="30" cy="30" r="29" /></clipPath>
      </defs>
      <circle cx="30" cy="30" r="29" fill="url(#ball)" stroke="#58716b" />
      <g clipPath="url(#ballClip)">
        {cells.map(([x, y, r]) => (
          <g key={`${x}-${y}`}>
            <circle cx={x} cy={y} r={r} fill="#dcebe7" fillOpacity=".8" stroke="#4a625c" strokeDasharray="3 1" />
            <circle cx={x} cy={y} r={r / 2} fill="none" stroke="#b3c8c2" />
            <circle cx={x} cy={y} r="1" fill="#20302c" />
          </g>
        ))}
      </g>
    </svg>
  );
};

const Logo = () => (
  <svg width="30" height="36" viewBox="0 0 30 36" aria-hidden="true">
    <path d="M9 3l5-1 4 8-3 12L4 33Z" fill="#dd918e" />
    <path d="M14 2l13 26-7 3-4-9-8 5-4 6 6-17Z" fill="#c93232" />
    <path d="M5 26l3-13h8l9 16-5 2-3-5-8 1-1 4-5-1Z" fill="#e2413e" />
    <path d="M11 21l3-6 4 6Z" fill="#7d1014" />
    <path d="M4 33l5-2 1-4 7-1 3 5 7-3" fill="none" stroke="#8d1518" />
  </svg>
);

/* ---------- app ---------- */

const App = () => (
  <>
    <GlobalStyle />
    <Shell>
      <TitleBar>
        <AppButton aria-label="AutoCAD">
          <Logo />
          <Caret />
        </AppButton>
        <TitleRows>
          <TitleRow>
            <WorkspaceBox>
              <Icon name="gear" />
              <Select aria-label="工作空间" defaultValue="AutoCAD 经典" $pad={1}>
                <option>AutoCAD 经典</option>
              </Select>
              <Caret />
            </WorkspaceBox>
            {['new', 'open', 'save', 'saveAs'].map(n => (
              <IconButton key={n} $w={24} aria-label={n}><Icon name={n} /></IconButton>
            ))}
            <IconButton $w={24} aria-label="undo"><Icon name="undo" fill="#eee" /></IconButton>
            <IconButton $w={12} aria-label="undo list"><Caret $color="#555" /></IconButton>
            <IconButton $w={24} aria-label="redo"><Icon name="redo" color="#777" fill="#a5a5a5" /></IconButton>
            <IconButton $w={12} aria-label="redo list"><Caret $color="#555" /></IconButton>
            <IconButton $w={24} aria-label="print"><Icon name="print" /></IconButton>
            <IconButton $w={12} aria-label="customize"><Caret $color="#111" /></IconButton>
            <DocTitle>Drawing6.dwg</DocTitle>
            <IconButton $w={14} aria-label="expand"><Arrow dir="right" /></IconButton>
            <SearchInput aria-label="搜索" placeholder="键入关键字或短语" />
            <IconButton $w={24} aria-label="search"><Icon name="binoculars" /></IconButton>
            <IconButton $w={12} aria-label="search options"><Caret $color="#555" /></IconButton>
            {['key', 'dish', 'star'].map(n => (
              <IconButton key={n} $w={24} aria-label={n}><Icon name={n} /></IconButton>
            ))}
            <Separator $w={12} />
            <IconButton $w={24} aria-label="help"><Icon name="help" /></IconButton>
            <IconButton $w={12} aria-label="help options"><Caret $color="#555" /></IconButton>
            <WindowButtons $gap={15}>
              {['min', 'max', 'close'].map(n => (
                <IconButton key={n} $w={17} aria-label={n}><Icon name={n} size={16} /></IconButton>
              ))}
            </WindowButtons>
          </TitleRow>
          <MenuBar>
            {menus.map(m => <MenuItem key={m}><Mixed size={11}>{m}</Mixed></MenuItem>)}
            <WindowButtons>
              {['min', 'restore', 'close'].map(n => (
                <IconButton key={n} $w={17} aria-label={`document ${n}`}><Icon name={n} size={16} /></IconButton>
              ))}
            </WindowButtons>
          </MenuBar>
        </TitleRows>
      </TitleBar>

      <ToolRow $gap={4}>
        <Strip>
          <Grip />
          <Bars items={standard} />
        </Strip>
        <Strip $grow>
          <Grip />
          <Bars items={['textStyle']} />
          <Combo label="文字样式" value="数字和字母" w={118} pad={16} />
          <Separator $w={8} />
          <Bars items={['dimStyle']} />
          <Combo label="标注样式" value="机械样式" w={118} pad={16} />
          <Separator $w={8} />
          <Bars items={['tableStyle']} />
          <Combo label="表格样式" value="Standard" grow mono pad={3} />
        </Strip>
      </ToolRow>

      <ToolRow $gap={5}>
        <Strip>
          <Grip />
          <Combo label="工作空间" value="AutoCAD 经典" w={173} pad={7} />
          <Bars items={['gear', 'wsHome']} />
        </Strip>
        <Strip>
          <Grip />
          <Bars items={['layers']} />
          <Combo label="图层" value="剖面线" w={298} pad={2}>
            {['bulb', 'sun', 'freezeVp', 'unlock'].map(n => <Icon key={n} name={n} size={17} />)}
            <Swatch />
          </Combo>
          <Bars items={['layerIso', 'layerPrev', 'layerState']} />
        </Strip>
        <Strip $grow>
          <Grip />
          <Combo label="颜色" value="ByLayer" w={148} pad={6} mono><Swatch /></Combo>
          <Separator $w={8} />
          <Combo label="线型" value="ByLayer" w={157} pad={4} mono><SampleLine $w={60} /></Combo>
          <Separator $w={8} />
          <Combo label="线宽" value="ByLayer" grow pad={4} mono><SampleLine $w={35} /></Combo>
        </Strip>
      </ToolRow>

      <Middle>
        <LeftDock>
          <Palette>
            <Grip $flat />
            {drawTools.map(n => (
              <IconButton key={n} $w={22} aria-label={n}>
                {n === 'mtext' ? <Letter>A</Letter> : <Icon name={n} />}
              </IconButton>
            ))}
          </Palette>
        </LeftDock>

        <DrawWindow>
          <CanvasRow>
            <Canvas>
              <PartDrawing />
              <CursorTip>
                <span><Mixed>{PICK}</Mixed></span>
                <TipKey><Arrow dir="tip" /></TipKey>
              </CursorTip>
            </Canvas>
            <Track $vertical>
              <ScrollButton $w={17} aria-label="up"><Arrow dir="up" /></ScrollButton>
              <Spacer $grow={5} />
              <ScrollButton $w={17} aria-label="vertical position" />
              <Spacer $grow={4} />
              <ScrollButton $w={17} aria-label="down"><Arrow dir="down" /></ScrollButton>
            </Track>
          </CanvasRow>
          <TabRow>
            {['first', 'left', 'right', 'last'].map(d => (
              <NavButton key={d} aria-label={d}><Arrow dir={d} color="#83807b" /></NavButton>
            ))}
            <Slash back />
            <Tab $active>模型</Tab>
            <Slash left="#ebebeb" />
            <Tab>布局<Half $size={10}>1</Half></Tab>
            <Slash />
            <Tab>布局<Half $size={10}>2</Half></Tab>
            <Slash />
            <Spacer $grow={4} />
            <Splitter />
            <Track $fill={3}>
              <ScrollButton $h={14} aria-label="left"><Arrow dir="left" /></ScrollButton>
              <Spacer />
              <ScrollButton $h={14} aria-label="horizontal position" />
              <Spacer $grow={5} />
              <ScrollButton $h={14} aria-label="right"><Arrow dir="right" /></ScrollButton>
            </Track>
            <CornerBox />
          </TabRow>
        </DrawWindow>

        <RightDock>
          <Palette>
            <Grip $flat />
            {modifyTools.map(n => (
              <IconButton key={n} $w={22} aria-label={n}><Icon name={n} /></IconButton>
            ))}
          </Palette>
          <Palette>
            <Grip $flat />
            {['front', 'back', 'above', 'under'].map(n => (
              <IconButton key={n} $w={22} aria-label={n}><Icon name={n} /></IconButton>
            ))}
            <Rule />
            <LeaderButton $w={22} aria-label="text to front">
              <LeaderLabel>ABC</LeaderLabel>
              <Icon name="leader" size={14} />
            </LeaderButton>
          </Palette>
        </RightDock>
      </Middle>

      <CommandPanel>
        <CommandGrip />
        <CommandBody>
          <History>
            <HistoryText>
              <Mixed size={13}>{`${PROMPT}  指定对角点:\n${PICK}`}</Mixed>
            </HistoryText>
            <Track $vertical>
              <ScrollButton $w={17} aria-label="history up"><Arrow dir="up" /></ScrollButton>
              <Spacer />
              <ScrollButton $w={17} aria-label="history down"><Arrow dir="down" /></ScrollButton>
            </Track>
          </History>
          <PromptRow>
            <label htmlFor="command"><Mixed size={13}>{PROMPT}</Mixed></label>
            <PromptInput id="command" />
            <Track $min={61}>
              <ScrollButton $w={30} $h={17} aria-label="command position" />
              <Spacer />
              <ScrollButton $h={17} aria-label="command right"><Arrow dir="right" /></ScrollButton>
            </Track>
            <CornerBox />
          </PromptRow>
        </CommandBody>
      </CommandPanel>

      <StatusBar>
        {toggles.map(([n, on]) => (
          <StatusButton key={n} $on={on} aria-pressed={!!on} aria-label={n}><Icon name={n} /></StatusButton>
        ))}
        <Spacer />
        <StatusButton $w={30}>模型</StatusButton>
        <StatusButton aria-label="paper"><Icon name="paper" /></StatusButton>
        <StatusButton aria-label="quick view"><Icon name="quick" /></StatusButton>
        <StatusGap $w={18} />
        <StatusButton $w={54}><Icon name="anno" /><Half $size={10}>1:1</Half><Caret $color="#111" /></StatusButton>
        {['annoVis', 'anno', 'quick', 'lock', 'hardware'].map(n => (
          <StatusButton key={n} aria-label={`status ${n}`}><Icon name={n} /></StatusButton>
        ))}
        <StatusButton $w={33} aria-label="status tip"><Icon name="tip" /></StatusButton>
        <StatusButton aria-label="status menu"><Caret $color="#111" /></StatusButton>
        <StatusButton aria-label="clean screen"><Icon name="clean" /></StatusButton>
        <StatusGap $w={13} />
      </StatusBar>

      <Brand>
        <Sphere />
        <BrandText>
          <BrandName><span>专</span><span>职</span><span>网</span></BrandName>
          <BrandUrl>Zhuanzhi.Net</BrandUrl>
        </BrandText>
      </Brand>
    </Shell>
  </>
);

export default App;
